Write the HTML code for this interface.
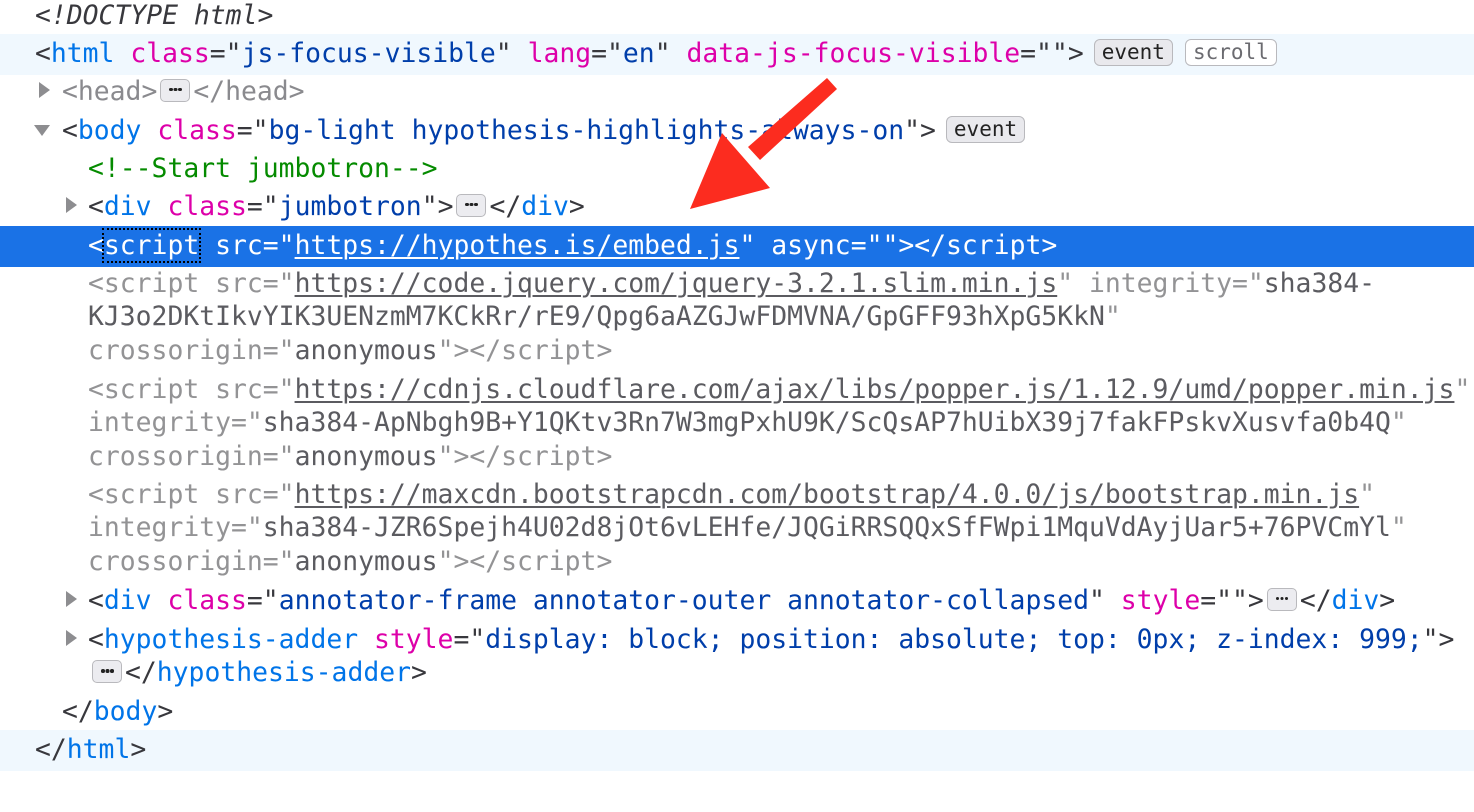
<!DOCTYPE html>
<html><head><style>
html,body{margin:0;padding:0;background:#fff;width:1474px;height:812px;overflow:hidden}
body{font-family:"DejaVu Sans Mono","Liberation Mono",monospace;font-size:26.4px;color:#38383d;position:relative}
.r{position:absolute;left:0;width:1474px;padding-top:2.5px}
.l{height:33.5px;line-height:33.5px;white-space:pre}
.hl{background:#f0f8fe}
.sel{background:#1a72e6;color:#fff}
.sel *{color:#fff!important}
.t{color:#0074e8}.a{color:#dd00a9}.v{color:#003eaa}.c{color:#058b00}
.g{color:#939395}.gv{color:#5b5b60}
.u{text-decoration:underline;text-decoration-thickness:1.5px;text-underline-offset:3px}
.tri{position:absolute;width:0;height:0}
.tr{border-left:11px solid #8d8d90;border-top:8px solid transparent;border-bottom:8px solid transparent}
.td{border-top:11px solid #8d8d90;border-left:8px solid transparent;border-right:8px solid transparent}
.e{display:inline-block;width:30px;height:23px;margin:0 3px 0 3px;border:1.5px solid #b9b9bd;border-radius:5px;background:#ececf0;vertical-align:middle;box-sizing:border-box;position:relative;top:-2px;white-space:normal}
.e::after{content:"";position:absolute;left:8px;top:8px;width:3.5px;height:3.5px;border-radius:50%;background:#222;box-shadow:4.5px 0 0 #222,9px 0 0 #222}
.b{display:inline-block;font-size:21px;line-height:25px;padding:0 7px;border:1.5px solid #b9b9bd;border-radius:6px;vertical-align:middle;position:relative;top:-2px;margin-left:10px}
.foc{outline:2px dotted #000;outline-offset:0}
</style></head><body>
<div class="r" style="top:-4px"><div class="l"><span style="position:absolute;left:35px;font-style:italic">&lt;!DOCTYPE html&gt;</span></div></div>
<div class="r hl" style="top:34px;height:38px;padding-top:2.5px"><div class="l"><span style="position:absolute;left:35px">&lt;<span class="t">html</span> <span class="a">class</span>="<span class="v">js-focus-visible</span>" <span class="a">lang</span>="<span class="v">en</span>" <span class="a">data-js-focus-visible</span>=""&gt;<span class="b" style="background:#e9e9ed;color:#222">event</span><span class="b" style="background:#fff;color:#6b6b70;margin-left:12px">scroll</span></span></div></div>
<div class="r" style="top:72px"><div class="tri tr" style="left:39px;top:10px"></div><div class="l"><span style="position:absolute;left:62px;color:#8a8a8e">&lt;head&gt;<span class="e"></span>&lt;/head&gt;</span></div></div>
<div class="r" style="top:111px"><div class="tri td" style="left:34px;top:14px"></div><div class="l"><span style="position:absolute;left:62px">&lt;<span class="t">body</span> <span class="a">class</span>="<span class="v">bg-light hypothesis-highlights-always-on</span>"&gt;<span class="b" style="background:#e9e9ed;color:#222">event</span></span></div></div>
<div class="r" style="top:149px"><div class="l"><span style="position:absolute;left:88px" class="c">&lt;!--Start jumbotron--&gt;</span></div></div>
<div class="r" style="top:187px"><div class="tri tr" style="left:66px;top:10px"></div><div class="l"><span style="position:absolute;left:88px">&lt;<span class="t">div</span> <span class="a">class</span>="<span class="v">jumbotron</span>"&gt;<span class="e"></span>&lt;/<span class="t">div</span>&gt;</span></div></div>
<div class="r sel" style="top:226px;height:38px;padding-top:2.5px"><div class="l"><span style="position:absolute;left:88px">&lt;<span class="foc">script</span> src="<span class="u">https://hypothes.is/embed.js</span>" async=""&gt;&lt;/script&gt;</span></div></div>
<div class="r g" style="top:264px"><div class="l" style="padding-left:88px">&lt;script src="<span class="gv u">https://code.jquery.com/jquery-3.2.1.slim.min.js</span>" integrity="<span class="gv">sha384-</span></div><div class="l" style="padding-left:88px"><span class="gv">KJ3o2DKtIkvYIK3UENzmM7KCkRr/rE9/Qpg6aAZGJwFDMVNA/GpGFF93hXpG5KkN</span>"</div><div class="l" style="padding-left:88px">crossorigin="<span class="gv">anonymous</span>"&gt;&lt;/script&gt;</div></div>
<div class="r g" style="top:370px"><div class="l" style="padding-left:88px">&lt;script src="<span class="gv u">https://cdnjs.cloudflare.com/ajax/libs/popper.js/1.12.9/umd/popper.min.js</span>"</div><div class="l" style="padding-left:88px">integrity="<span class="gv">sha384-ApNbgh9B+Y1QKtv3Rn7W3mgPxhU9K/ScQsAP7hUibX39j7fakFPskvXusvfa0b4Q</span>"</div><div class="l" style="padding-left:88px">crossorigin="<span class="gv">anonymous</span>"&gt;&lt;/script&gt;</div></div>
<div class="r g" style="top:475px"><div class="l" style="padding-left:88px">&lt;script src="<span class="gv u">https://maxcdn.bootstrapcdn.com/bootstrap/4.0.0/js/bootstrap.min.js</span>"</div><div class="l" style="padding-left:88px">integrity="<span class="gv">sha384-JZR6Spejh4U02d8jOt6vLEHfe/JQGiRRSQQxSfFWpi1MquVdAyjUar5+76PVCmYl</span>"</div><div class="l" style="padding-left:88px">crossorigin="<span class="gv">anonymous</span>"&gt;&lt;/script&gt;</div></div>
<div class="r" style="top:581px"><div class="tri tr" style="left:66px;top:10px"></div><div class="l" style="padding-left:88px">&lt;<span class="t">div</span> <span class="a">class</span>="<span class="v">annotator-frame annotator-outer annotator-collapsed</span>" <span class="a">style</span>=""&gt;<span class="e"></span>&lt;/<span class="t">div</span>&gt;</div></div>
<div class="r" style="top:620px"><div class="tri tr" style="left:66px;top:10px"></div><div class="l" style="padding-left:88px">&lt;<span class="t">hypothesis-adder</span> <span class="a">style</span>="<span class="v">display: block; position: absolute; top: 0px; z-index: 999;</span>"&gt;</div><div class="l" style="padding-left:89px"><span class="e"></span>&lt;/<span class="t">hypothesis-adder</span>&gt;</div></div>
<div class="r" style="top:692px"><div class="l" style="padding-left:62px">&lt;/<span class="t">body</span>&gt;</div></div>
<div class="r hl" style="top:730px;height:38px;padding-top:2.5px"><div class="l" style="padding-left:35px">&lt;/<span class="t">html</span>&gt;</div></div>
<svg style="position:absolute;left:0;top:0" width="1474" height="812"><polygon points="827,78 837,89 760,160 748,147" fill="#fc2c1f"/><polygon points="690,209 722,133 770,188" fill="#fc2c1f"/></svg>
</body></html>
